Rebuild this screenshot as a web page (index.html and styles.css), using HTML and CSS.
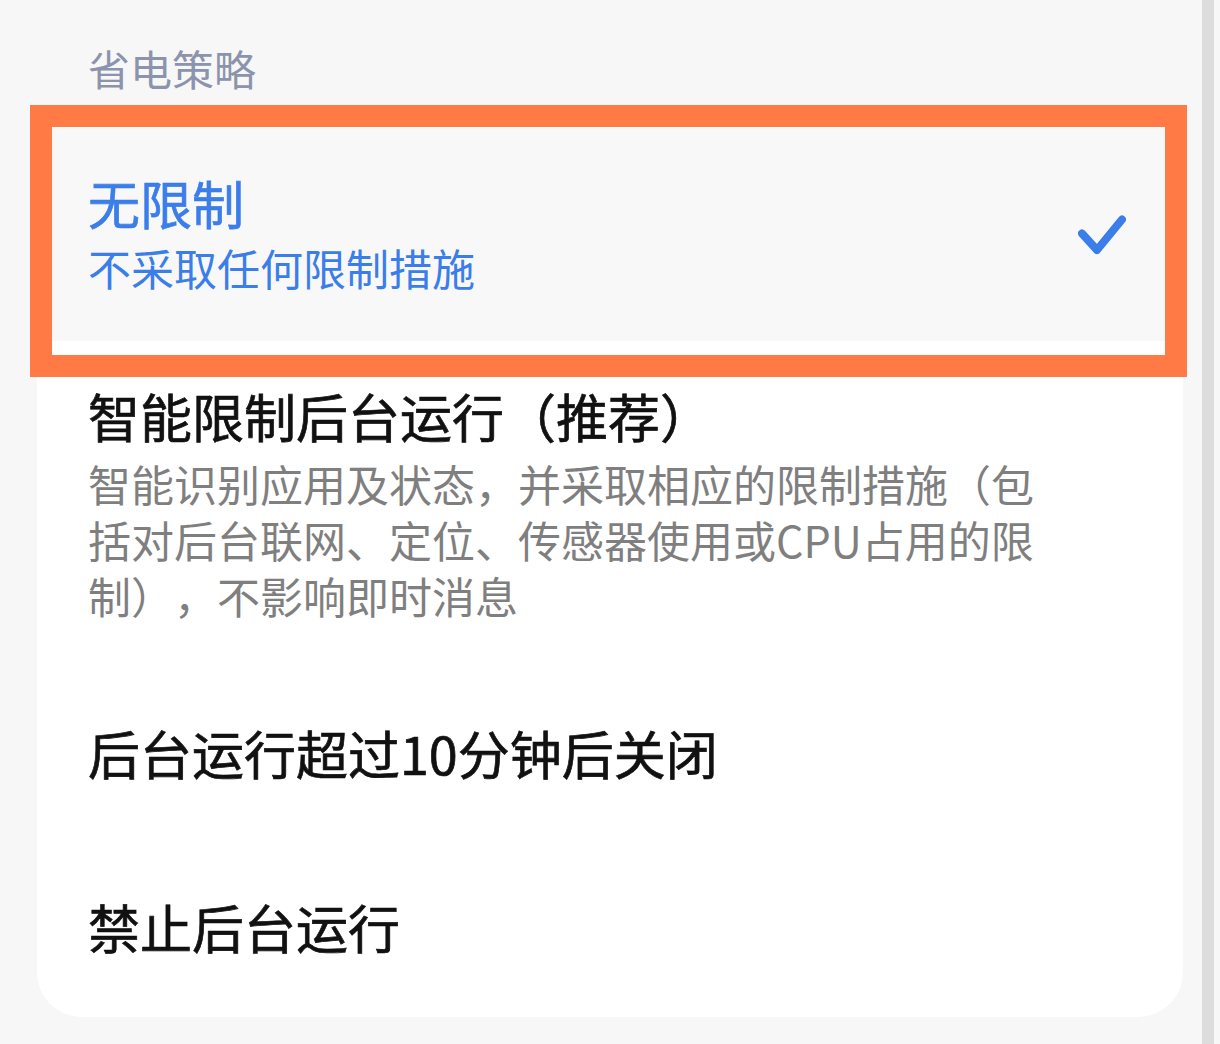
FILE: index.html
```html
<!DOCTYPE html>
<html>
<head>
  <meta charset="UTF-8">
  <title>省电策略</title>
  <link rel="stylesheet" href="styles.css">
</head>
<body>
<div class="page">
  <h2 class="section-title">省电策略</h2>
  <div class="card">
    <div class="item selected">
      <div class="item-text">
        <div class="item-title">无限制</div>
        <div class="item-sub">不采取任何限制措施</div>
      </div>
      <div class="check">
        <svg viewBox="0 0 48 48" width="48" height="48">
          <polyline points="4,22.5 19,39 44,8.5" fill="none" stroke="#3b7ee9" stroke-width="8" stroke-linecap="round" stroke-linejoin="round"/>
        </svg>
      </div>
    </div>
    <div class="item">
      <div class="item-text">
        <div class="item-title">智能限制后台运行（推荐）</div>
        <div class="item-desc">智能识别应用及状态，并采取相应的限制措施（包括对后台联网、定位、传感器使用或CPU占用的限制），不影响即时消息</div>
      </div>
      <div class="check"></div>
    </div>
    <div class="item">
      <div class="item-text">
        <div class="item-title">后台运行超过10分钟后关闭</div>
      </div>
      <div class="check"></div>
    </div>
    <div class="item">
      <div class="item-text">
        <div class="item-title">禁止后台运行</div>
      </div>
      <div class="check"></div>
    </div>
  </div>
  <!-- highlight frame drawn over the first option -->
  <div class="highlight"></div>
</div>
<div class="scrollbar"></div>
</body>
</html>
```

FILE: styles.css
```css
* {
  margin: 0;
  padding: 0;
  box-sizing: border-box;
}

body {
  background: #f7f7f7;
  font-family: "Noto Sans CJK SC", "Noto Sans", sans-serif;
  text-spacing-trim: space-all;
  width: 1220px;
  height: 1044px;
  overflow: hidden;
}

.page {
  position: relative;
  padding: 40px 37px 0 37px;
}

.section-title {
  font-size: 42px;
  line-height: 56px;
  font-weight: 400;
  color: #8c93ac;
  padding-left: 51px;
}

.card {
  margin-top: 14px;
  background: #ffffff;
  border-radius: 45px;
  padding-top: 18px;
  overflow: hidden;
}

.item {
  display: flex;
  align-items: center;
  min-height: 174px;
  padding: 40px 57px 46px 51px;
}

.item.selected {
  background: #f8f8f9;
}

.item-text {
  flex: 1;
}

.item-title {
  font-size: 52px;
  line-height: 70px;
  font-weight: 400;
  -webkit-text-stroke: 0.7px currentColor;
  color: #111111;
}

.item-sub {
  font-size: 43px;
  line-height: 56px;
  margin-top: 1px;
  color: #3b7ee9;
}

.selected .item-title {
  color: #3b7ee9;
}

.item-desc {
  font-size: 43px;
  line-height: 56px;
  margin-top: 4px;
  color: #7f7f7f;
}

.check {
  width: 48px;
  height: 48px;
  margin-left: 18px;
  margin-top: 6px;
  flex-shrink: 0;
}

.check svg {
  display: block;
}

.highlight {
  position: absolute;
  left: 30px;
  top: 105px;
  width: 1157px;
  height: 272px;
  border: 22px solid #ff7a45;
}

.scrollbar {
  position: fixed;
  top: 0;
  bottom: 0;
  right: 6px;
  width: 12px;
  background: #dddddd;
}
```
